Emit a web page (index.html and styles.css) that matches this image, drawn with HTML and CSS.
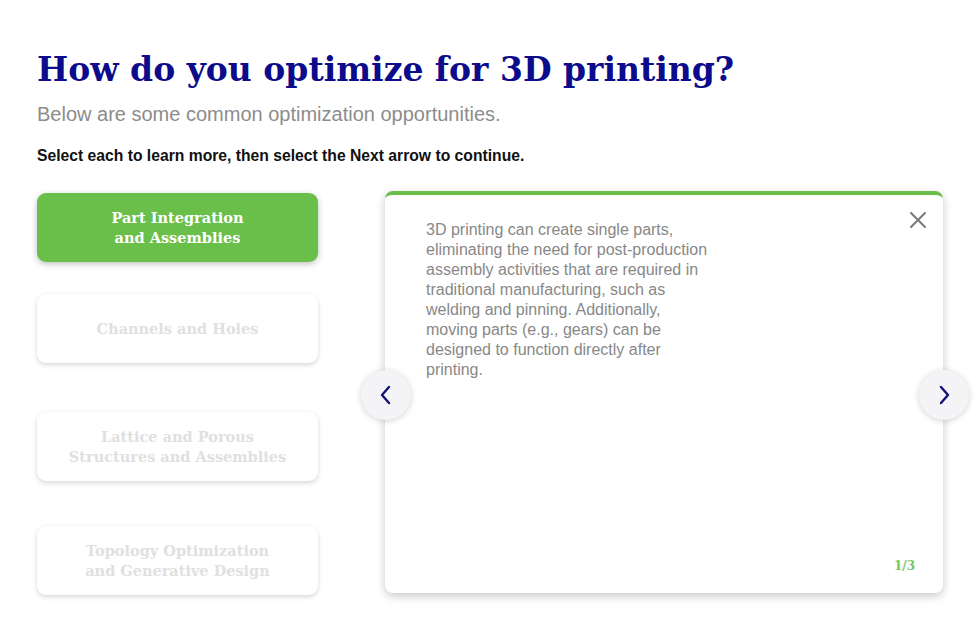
FILE: index.html
```html
<!DOCTYPE html>
<html>
<head>
<meta charset="utf-8">
<link rel="stylesheet" href="styles.css">
</head>
<body>
<main class="page">
  <h1 class="title">How do you optimize for 3D printing?</h1>
  <p class="subtitle">Below are some common optimization opportunities.</p>
  <p class="instruction">Select each to learn more, then select the Next arrow to continue.</p>
  <div class="content">
    <div class="tabs">
      <button class="tab active">Part Integration<br>and Assemblies</button>
      <button class="tab tab2">Channels and Holes</button>
      <button class="tab tab3">Lattice and Porous<br>Structures and Assemblies</button>
      <button class="tab tab4">Topology Optimization<br>and Generative Design</button>
    </div>
    <div class="panel-wrap">
      <button class="nav prev" aria-label="Previous">
        <svg width="16" height="20" viewBox="0 0 16 20"><path d="M11 2 L4 10 L11 18" fill="none" stroke="#10107a" stroke-width="2.4" stroke-linecap="round" stroke-linejoin="round"/></svg>
      </button>
      <section class="panel">
        <p class="panel-text">3D printing can create single parts, eliminating the need for post-production assembly activities that are required in traditional manufacturing, such as welding and pinning. Additionally, moving parts (e.g., gears) can be designed to function directly after printing.</p>
        <button class="close" aria-label="Close">
          <svg width="18" height="18" viewBox="0 0 18 18"><path d="M2 2 L16 16 M16 2 L2 16" stroke="#7a7a7a" stroke-width="2" stroke-linecap="round"/></svg>
        </button>
        <div class="counter">1/3</div>
      </section>
      <button class="nav next" aria-label="Next">
        <svg width="16" height="20" viewBox="0 0 16 20"><path d="M5 2 L12 10 L5 18" fill="none" stroke="#10107a" stroke-width="2.4" stroke-linecap="round" stroke-linejoin="round"/></svg>
      </button>
    </div>
  </div>
</main>
</body>
</html>
```
FILE: styles.css
```css
* { box-sizing: border-box; }
html, body { margin: 0; padding: 0; background: #fff; }
body { width: 980px; height: 642px; overflow: hidden; }
.page { padding: 48px 0 0 37px; }
.title {
  margin: 0;
  font-family: "DejaVu Serif", Georgia, serif;
  font-weight: bold;
  font-size: 33px;
  line-height: 44px;
  color: #0b0b8c;
  letter-spacing: 0;
}
.subtitle {
  margin: 10px 0 0;
  font-family: "Liberation Sans", Arial, sans-serif;
  font-size: 20px;
  line-height: 24px;
  color: #8c8c8c;
}
.instruction {
  margin: 21px 0 0;
  font-family: "Liberation Sans", Arial, sans-serif;
  font-weight: bold;
  font-size: 15.7px;
  line-height: 18px;
  color: #111;
}
.content { display: flex; margin-top: 26px; }
.tabs { display: flex; flex-direction: column; width: 281px; padding-top: 2px; }
.tab {
  height: 69px;
  border: none;
  border-radius: 9px;
  background: #fff;
  box-shadow: 0 2px 5px rgba(0,0,0,0.16);
  font-family: "DejaVu Serif", Georgia, serif;
  font-weight: bold;
  font-size: 14.5px;
  line-height: 20px;
  color: #e0e0e0;
  padding: 0;
}
.tab.active { background: #6abf4b; color: #fff; box-shadow: 0 2px 6px rgba(0,0,0,0.25); }
.tab2 { margin-top: 32px; }
.tab3 { margin-top: 49px; }
.tab4 { margin-top: 45px; }
.panel-wrap { position: relative; margin-left: 67px; width: 558px; }
.panel {
  position: relative;
  height: 402px;
  background: #fff;
  border-top: 4px solid #6abf4b;
  border-radius: 8px;
  box-shadow: 0 3px 10px rgba(0,0,0,0.22);
  padding: 25px 0 0 41px;
}
.panel-text {
  margin: 0;
  width: 284px;
  font-family: "Liberation Sans", Arial, sans-serif;
  font-size: 16px;
  line-height: 20px;
  color: #888;
}
.close {
  position: absolute;
  top: 16px;
  right: 16px;
  width: 18px;
  height: 18px;
  border: none;
  background: none;
  padding: 0;
}
.close svg { display: block; }
.counter {
  position: absolute;
  right: 28px;
  bottom: 20px;
  font-family: "DejaVu Serif", Georgia, serif;
  font-weight: bold;
  font-size: 12px;
  color: #7bc560;
}
.nav {
  position: absolute;
  top: 179px;
  width: 50px;
  height: 50px;
  border-radius: 50%;
  border: none;
  background: #f4f4f6;
  box-shadow: 0 1px 6px rgba(0,0,0,0.18);
  display: flex;
  align-items: center;
  justify-content: center;
  padding: 0;
  z-index: 2;
}
.prev { left: -24px; }
.next { right: -26px; }
```
